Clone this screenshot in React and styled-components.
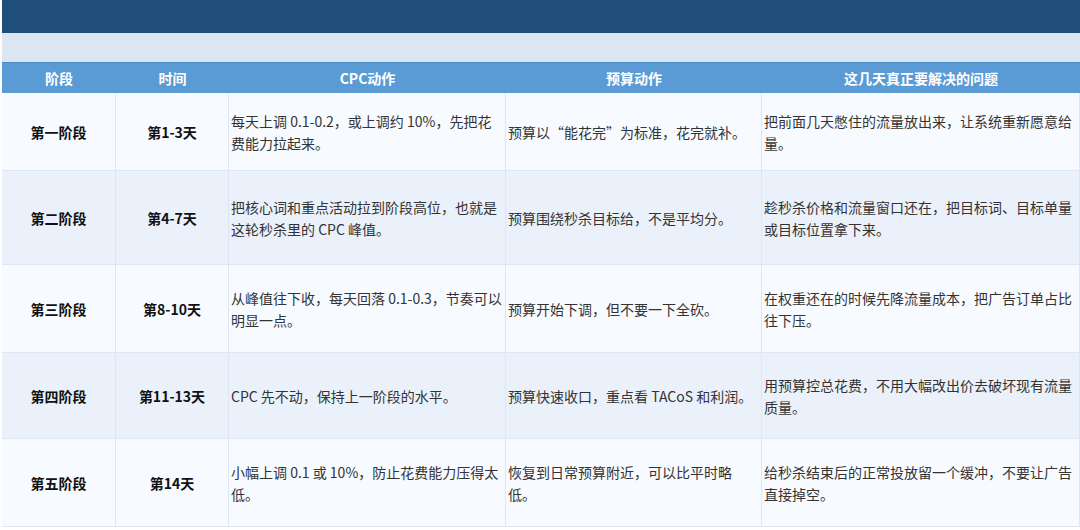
import React from "react";
import styled, { createGlobalStyle } from "styled-components";

const Global = createGlobalStyle`
  body { margin: 0; background: #fff; font-family: "Noto Sans CJK SC", "Noto Sans", sans-serif; }
`;

const Page = styled.div`
  width: 1080px;
  height: 530px;
  padding-left: 2px;
  box-sizing: border-box;
  overflow: hidden;
`;
const TopBar = styled.div`
  height: 33px;
  background: #1f4e79;
`;
const Band = styled.div`
  height: 29px;
  background: #dce6f0;
`;
const Table = styled.div`
  display: grid;
  grid-template-columns: 114px 113px 277px 256px 1fr;
`;
const Head = styled.div`
  height: 30px;
  background: #5b9bd5;
  color: #fff;
  font-weight: 700;
  font-size: 14px;
  display: flex;
  align-items: center;
  justify-content: center;
  border-top: 1px solid #4f8ccc;
`;
const Cell = styled.div`
  height: ${(p) => p.$h}px;
  background: ${(p) => (p.$even ? "#eaf1fa" : "#f7faff")};
  border-right: 1px solid #dde6f2;
  border-bottom: 1px solid #dde6f2;
  box-sizing: border-box;
  display: flex;
  align-items: center;
  justify-content: ${(p) => (p.$center ? "center" : "flex-start")};
  padding: ${(p) => (p.$center ? "0" : "0 3px 0 2px")};
  font-size: 14px;
  line-height: 22px;
  color: ${(p) => (p.$center ? "#111" : "#333")};
  font-weight: ${(p) => (p.$center ? 700 : 400)};
`;

const rows = [
  [78, "第一阶段", "第1-3天", "每天上调 0.1-0.2，或上调约 10%，先把花费能力拉起来。", "预算以“能花完”为标准，花完就补。", "把前面几天憋住的流量放出来，让系统重新愿意给量。"],
  [94, "第二阶段", "第4-7天", "把核心词和重点活动拉到阶段高位，也就是这轮秒杀里的 CPC 峰值。", "预算围绕秒杀目标给，不是平均分。", "趁秒杀价格和流量窗口还在，把目标词、目标单量或目标位置拿下来。"],
  [88, "第三阶段", "第8-10天", "从峰值往下收，每天回落 0.1-0.3，节奏可以明显一点。", "预算开始下调，但不要一下全砍。", "在权重还在的时候先降流量成本，把广告订单占比往下压。"],
  [86, "第四阶段", "第11-13天", "CPC 先不动，保持上一阶段的水平。", "预算快速收口，重点看 TACoS 和利润。", "用预算控总花费，不用大幅改出价去破坏现有流量质量。"],
  [88, "第五阶段", "第14天", "小幅上调 0.1 或 10%，防止花费能力压得太低。", "恢复到日常预算附近，可以比平时略低。", "给秒杀结束后的正常投放留一个缓冲，不要让广告直接掉空。"],
];

export default function App() {
  return (
    <Page>
      <Global />
      <TopBar />
      <Band />
      <Table>
        {["阶段", "时间", "CPC动作", "预算动作", "这几天真正要解决的问题"].map((h) => (
          <Head key={h}>{h}</Head>
        ))}
        {rows.map(([h, ...cells], i) =>
          cells.map((c, j) => (
            <Cell key={i + "-" + j} $h={h} $even={i % 2 === 1} $center={j < 2}>
              {c}
            </Cell>
          ))
        )}
      </Table>
    </Page>
  );
}
